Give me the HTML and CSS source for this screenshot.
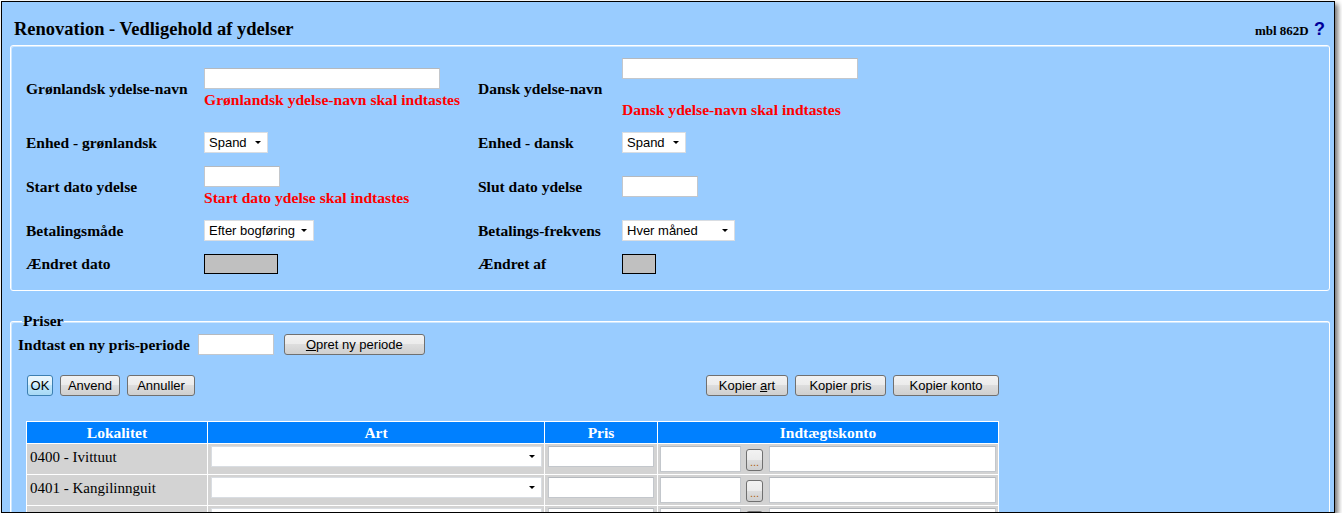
FILE: index.html
```html
<!DOCTYPE html>
<html lang="da">
<head>
  <meta charset="UTF-8" />
  <title>Renovation - Vedligehold af ydelser</title>
  <link rel="stylesheet" href="styles.css">
</head>
<body>

  <div class="window">

    <div class="header">
      <h1>Renovation - Vedligehold af ydelser</h1>
      <div class="screen-id">mbl 862D <span class="help">?</span></div>
    </div>

    <fieldset class="box">
      <div class="form-grid">
        <div class="label">Grønlandsk ydelse-navn</div>
        <div class="cell">
          <input type="text" class="txt wide" />
          <div class="error">Grønlandsk ydelse-navn skal indtastes</div>
        </div>
        <div class="label">Dansk ydelse-navn</div>
        <div class="cell">
          <input type="text" class="txt wide" />
          <div class="error spaced">Dansk ydelse-navn skal indtastes</div>
        </div>

        <div class="label">Enhed - grønlandsk</div>
        <div class="cell"><div class="select w-spand">Spand</div></div>
        <div class="label">Enhed - dansk</div>
        <div class="cell"><div class="select w-spand">Spand</div></div>

        <div class="label">Start dato ydelse</div>
        <div class="cell">
          <input type="text" class="txt date" />
          <div class="error">Start dato ydelse skal indtastes</div>
        </div>
        <div class="label">Slut dato ydelse</div>
        <div class="cell"><input type="text" class="txt date" /></div>

        <div class="label">Betalingsmåde</div>
        <div class="cell"><div class="select w-bet">Efter bogføring</div></div>
        <div class="label">Betalings-frekvens</div>
        <div class="cell"><div class="select w-frek">Hver måned</div></div>

        <div class="label">Ændret dato</div>
        <div class="cell"><div class="readonly ro-date"></div></div>
        <div class="label">Ændret af</div>
        <div class="cell"><div class="readonly ro-user"></div></div>
      </div>
    </fieldset>

    <fieldset class="box prices">
      <legend>Priser</legend>

      <div class="period-row">
        <span class="label">Indtast en ny pris-periode</span>
        <input type="text" class="txt date" />
        <button class="btn btn-period"><u>O</u>pret ny periode</button>
      </div>

      <div class="toolbar">
        <div class="btn-group">
          <button class="btn btn-ok">OK</button>
          <button class="btn b-anvend">Anvend</button>
          <button class="btn b-annuller">Annuller</button>
        </div>
        <div class="btn-group">
          <button class="btn b-art">Kopier <u>a</u>rt</button>
          <button class="btn b-pris">Kopier pris</button>
          <button class="btn b-konto">Kopier konto</button>
        </div>
      </div>

      <table class="price-table">
        <thead>
          <tr>
            <th class="col-lok">Lokalitet</th>
            <th class="col-art">Art</th>
            <th class="col-pris">Pris</th>
            <th class="col-konto">Indtægtskonto</th>
          </tr>
        </thead>
        <tbody>
          <tr>
            <td class="lok">0400 - Ivittuut</td>
            <td><div class="select w-art"></div></td>
            <td><input type="text" class="txt pris" /></td>
            <td>
              <div class="konto">
                <input type="text" class="txt konto-nr" />
                <button class="dots">...</button>
                <input type="text" class="txt konto-navn" />
              </div>
            </td>
          </tr>
          <tr>
            <td class="lok">0401 - Kangilinnguit</td>
            <td><div class="select w-art"></div></td>
            <td><input type="text" class="txt pris" /></td>
            <td>
              <div class="konto">
                <input type="text" class="txt konto-nr" />
                <button class="dots">...</button>
                <input type="text" class="txt konto-navn" />
              </div>
            </td>
          </tr>
          <tr>
            <td class="lok">0500 - Paamiut</td>
            <td><div class="select w-art"></div></td>
            <td><input type="text" class="txt pris" /></td>
            <td>
              <div class="konto">
                <input type="text" class="txt konto-nr" />
                <button class="dots">...</button>
                <input type="text" class="txt konto-navn" />
              </div>
            </td>
          </tr>
        </tbody>
      </table>
    </fieldset>

  </div>

</body>
</html>
```

FILE: styles.css
```css
* {
  box-sizing: border-box;
}

body {
  margin: 0;
  background: #fff;
  font-family: 'Liberation Serif', 'Times New Roman', serif;
  font-size: 14px;
  color: #000;
}

.window {
  margin: 1px 0 0 1px;
  width: 1334px;
  height: 512px;
  background: #99ccff;
  border: 1px solid #000;
  box-shadow: 3px 3px 5px rgba(0, 0, 0, 0.55);
  overflow: hidden;
  padding: 0 4px 0 8px;
}

.header {
  display: flex;
  justify-content: space-between;
  align-items: baseline;
  padding: 17px 5px 6px 4px;
  height: 43px;
}

.header h1 {
  margin: 0;
  font-size: 18.5px;
  line-height: 20px;
  font-weight: bold;
}

.screen-id {
  font-size: 13px;
  font-weight: bold;
}

.help {
  font-family: 'Liberation Sans', Arial, sans-serif;
  font-size: 18px;
  color: #000099;
  margin-left: 2px;
}

.box {
  margin: 0;
  border: 1px solid #fff;
  border-radius: 3px;
  box-shadow: inset 1px 1px 0 rgba(255, 255, 255, 0.5);
  padding: 12px 0 16px 15px;
  min-width: 0;
}

.form-grid {
  display: grid;
  grid-template-columns: 178px 274px 144px 1fr;
  row-gap: 13px;
  align-items: center;
}

.label {
  font-weight: bold;
  font-size: 15.5px;
}

.cell {
  display: flex;
  flex-direction: column;
  align-items: flex-start;
}

.error {
  color: #ff0000;
  font-weight: bold;
  font-size: 15.6px;
  line-height: 18px;
  margin-top: 2px;
}

.error.spaced {
  margin-top: 22px;
}

.txt {
  height: 21px;
  border: 1px solid #c3c7cc;
  border-top-color: #b5b9be;
  background: #fff;
  padding: 0 3px;
  font-family: 'Liberation Sans', Arial, sans-serif;
  font-size: 13px;
  margin: 0;
}

.txt.wide {
  width: 236px;
}

.txt.date {
  width: 76px;
}

.select {
  position: relative;
  height: 21px;
  border: 1px solid #d9dde2;
  background: #fff;
  font-family: 'Liberation Sans', Arial, sans-serif;
  font-size: 13px;
  line-height: 19px;
  padding-left: 4px;
  color: #000;
}

.select::after {
  content: '';
  position: absolute;
  right: 6px;
  top: 8px;
  border-left: 3px solid transparent;
  border-right: 3px solid transparent;
  border-top: 3px solid #000;
}

.w-spand { width: 64px; }
.w-bet { width: 110px; }
.w-frek { width: 113px; }
.w-art { width: 331px; }

.readonly {
  height: 20px;
  background: #c0c0c0;
  border: 1px solid #000;
}

.ro-date { width: 74px; }
.ro-user { width: 34px; }

.prices {
  margin-top: 21px;
  padding: 0 0 0 7px;
  border-bottom: none;
}

.prices legend {
  font-weight: bold;
  font-size: 15.5px;
  line-height: 18px;
  padding: 0 1px;
  margin-left: 4px;
}

.period-row {
  display: flex;
  align-items: center;
  margin-top: 4px;
}

.period-row .label {
  margin-right: 8px;
}

.btn {
  height: 21px;
  border: 1px solid #707070;
  border-radius: 3px;
  background: linear-gradient(#f2f2f2, #ebebeb 50%, #dddddd 50%, #cfcfcf);
  font-family: 'Liberation Sans', Arial, sans-serif;
  font-size: 13px;
  color: #000;
  padding: 0;
  margin: 0;
}

.btn-period {
  width: 141px;
  margin-left: 10px;
}

.btn-ok {
  width: 26px;
  border-color: #3c7fb1;
  background: linear-gradient(#eaf6fd, #d9f0fc 50%, #bee6fd 50%, #a7d9f5);
}

.b-anvend { width: 60px; }
.b-annuller { width: 68px; }
.b-art { width: 82px; }
.b-pris { width: 91px; }
.b-konto { width: 106px; }

.toolbar {
  display: flex;
  justify-content: space-between;
  width: 973px;
  margin: 20px 0 0 8px;
  padding-left: 1px;
}

.btn-group {
  display: flex;
  gap: 7px;
}

.price-table {
  margin: 25px 0 0 8px;
  width: 973px;
  border-collapse: collapse;
  table-layout: fixed;
}

.price-table th,
.price-table td {
  border: 1px solid #fff;
}

.price-table th {
  background: #0080ff;
  color: #fff;
  font-weight: bold;
  font-size: 15.5px;
  height: 22px;
  line-height: 18px;
  padding: 0;
}

.col-lok { width: 181px; }
.col-art { width: 337px; }
.col-pris { width: 113px; }

.price-table td {
  background: #d3d3d3;
  padding: 2px 2px 2px 2px;
  vertical-align: top;
  height: 30px;
}

.price-table td.lok {
  padding: 5px 3px 0 3px;
  font-size: 15px;
  line-height: 16px;
}

.price-table .select {
  margin-left: 1px;
}

.txt.pris {
  width: 106px;
  margin-left: 1px;
}

.konto {
  display: flex;
  align-items: flex-start;
}

.txt.konto-nr {
  width: 81px;
  height: 26px;
}

.txt.konto-navn {
  width: 227px;
  height: 26px;
}

.dots {
  width: 17px;
  height: 22px;
  margin: 3px 6px 0 5px;
  padding: 0;
  border: 1px solid #707070;
  border-radius: 3px;
  background: linear-gradient(#f2f2f2, #ebebeb 50%, #dddddd 50%, #cfcfcf);
  color: #b06010;
  font-family: 'Liberation Sans', Arial, sans-serif;
  font-size: 11px;
  line-height: 24px;
}
```
